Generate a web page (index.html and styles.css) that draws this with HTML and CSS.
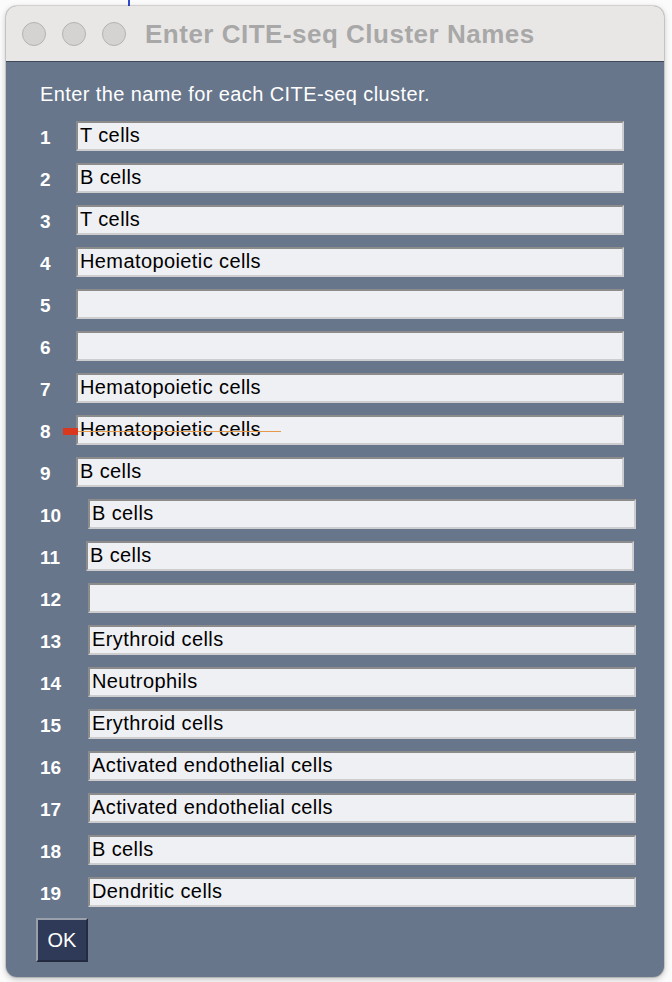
FILE: index.html
```html
<!DOCTYPE html>
<html>
<head>
<meta charset="utf-8">
<link rel="stylesheet" href="styles.css">
</head>
<body>
<div class="backdrop-line"></div>
<div class="window">
  <div class="titlebar">
    <div class="lights">
      <span class="light"></span>
      <span class="light"></span>
      <span class="light"></span>
    </div>
    <div class="title">Enter CITE-seq Cluster Names</div>
  </div>
  <div class="content">
    <div class="prompt">Enter the name for each CITE-seq cluster.</div>
    <div class="rows">
      <div class="row"><span class="num">1</span><div class="field">T cells</div></div>
      <div class="row"><span class="num">2</span><div class="field">B cells</div></div>
      <div class="row"><span class="num">3</span><div class="field">T cells</div></div>
      <div class="row"><span class="num">4</span><div class="field">Hematopoietic cells</div></div>
      <div class="row"><span class="num">5</span><div class="field"></div></div>
      <div class="row"><span class="num">6</span><div class="field"></div></div>
      <div class="row"><span class="num">7</span><div class="field">Hematopoietic cells</div></div>
      <div class="row"><span class="num">8</span><div class="field">Hematopoietic cells<span class="marker"></span><span class="strike"></span></div></div>
      <div class="row"><span class="num">9</span><div class="field">B cells</div></div>
      <div class="row"><span class="num wide">10</span><div class="field">B cells</div></div>
      <div class="row"><span class="num wide-11">11</span><div class="field">B cells</div></div>
      <div class="row"><span class="num wide">12</span><div class="field"></div></div>
      <div class="row"><span class="num wide">13</span><div class="field">Erythroid cells</div></div>
      <div class="row"><span class="num wide">14</span><div class="field">Neutrophils</div></div>
      <div class="row"><span class="num wide">15</span><div class="field">Erythroid cells</div></div>
      <div class="row"><span class="num wide">16</span><div class="field">Activated endothelial cells</div></div>
      <div class="row"><span class="num wide">17</span><div class="field">Activated endothelial cells</div></div>
      <div class="row"><span class="num wide">18</span><div class="field">B cells</div></div>
      <div class="row"><span class="num wide">19</span><div class="field">Dendritic cells</div></div>
    </div>
    <button class="ok">OK</button>
  </div>
</div>
</body>
</html>
```
FILE: styles.css
```css
html, body {
  margin: 0;
  padding: 0;
}
body {
  width: 672px;
  height: 982px;
  background: #fbfbfb;
  position: relative;
  overflow: hidden;
  font-family: "Liberation Sans", Arial, sans-serif;
}
.backdrop-line {
  position: absolute;
  left: 128px;
  top: 0;
  width: 2px;
  height: 6px;
  background: #2f4bd0;
}
.window {
  position: relative;
  margin: 6px 0 0 6px;
  width: 658px;
  height: 971px;
  border-radius: 11px;
  overflow: hidden;
  background: #67768b;
  box-shadow: 0 0 0 1px rgba(0,0,0,0.12), 0 2px 6px rgba(0,0,0,0.25);
  display: flex;
  flex-direction: column;
}
.titlebar {
  height: 55px;
  flex: 0 0 55px;
  background: #e9e7e5;
  border-bottom: 1px solid #3e4a5b;
  display: flex;
  align-items: center;
  padding-left: 16px;
  box-sizing: content-box;
}
.lights {
  display: flex;
  gap: 16px;
}
.light {
  width: 22px;
  height: 22px;
  border-radius: 50%;
  background: #d5d3d1;
  border: 1px solid #b5b3b1;
}
.title {
  margin-left: 19px;
  font-size: 26px;
  font-weight: bold;
  letter-spacing: 0.5px;
  color: #a8a8a8;
  margin-top: 1px;
}
.content {
  padding: 21px 0 0 34px;
  display: flex;
  flex-direction: column;
}
.prompt {
  color: #ffffff;
  font-size: 20px;
  line-height: 23px;
  letter-spacing: 0.4px;
}
.rows {
  margin-top: 15px;
  display: flex;
  flex-direction: column;
  gap: 12px;
}
.row {
  display: flex;
  align-items: center;
  height: 30px;
}
.num {
  width: 36px;
  flex: 0 0 36px;
  color: #ffffff;
  font-size: 19px;
  font-weight: bold;
  padding-top: 4px;
}
.num.wide {
  width: 48px;
  flex-basis: 48px;
}
.num.wide-11 {
  width: 46px;
  flex-basis: 46px;
}
.field {
  position: relative;
  box-sizing: border-box;
  width: 548px;
  height: 30px;
  background: #eff0f4;
  border-top: 2px solid #8c8c8c;
  border-left: 2px solid #8c8c8c;
  border-right: 2px solid #cdcdcf;
  border-bottom: 2px solid #cdcdcf;
  padding: 0 0 0 2px;
  font-size: 20px;
  letter-spacing: 0.4px;
  line-height: 25px;
  color: #000000;
  white-space: nowrap;
}
.marker {
  position: absolute;
  left: -15px;
  top: 11px;
  width: 15px;
  height: 7px;
  background: #d8391e;
}
.strike {
  position: absolute;
  left: 0;
  top: 14px;
  width: 203px;
  height: 1px;
  background: #e49a4a;
}
.ok {
  margin-top: 11px;
  margin-left: -4px;
  width: 52px;
  height: 44px;
  box-sizing: border-box;
  background: #2e3a57;
  border-top: 2px solid #9aa0ab;
  border-left: 2px solid #9aa0ab;
  border-right: 2px solid #232b40;
  border-bottom: 2px solid #232b40;
  color: #ffffff;
  font-family: "Liberation Sans", Arial, sans-serif;
  font-size: 20px;
  padding: 0;
  text-align: center;
}
```
